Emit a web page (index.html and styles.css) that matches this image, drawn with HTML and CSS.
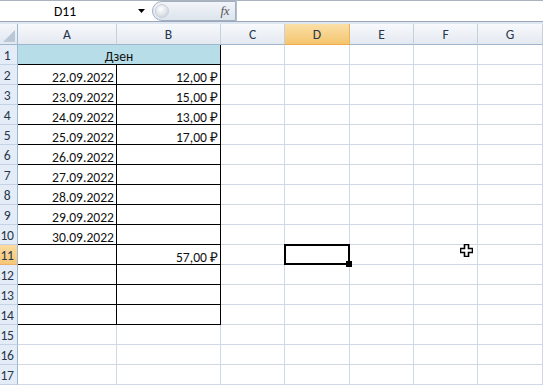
FILE: index.html
```html
<!DOCTYPE html>
<html lang="ru">
<head>
    <meta charset="UTF-8">
    <meta name="viewport" content="width=device-width, initial-scale=1.0">
    <title>Дзен</title>
    <link rel="stylesheet" href="styles.css">
</head>
<body>
<div class="formula-bar">
    <div class="name-box">
        <span class="name">D11</span>
        <svg class="drop" width="7" height="4" viewBox="0 0 7 4"><path d="M0 0h7L3.5 4z" fill="#000"/></svg>
    </div>
    <div class="fx-pill">
        <span class="knob"></span>
        <span class="fx">fx</span>
    </div>
    <div class="formula-input"></div>
</div>
<div class="strip"></div>

<div class="sheet">
    <!-- header row -->
    <div class="corner"><svg width="12" height="12" viewBox="0 0 12 12"><path d="M12 0V12H0z" fill="#b9c7d7"/></svg></div>
    <div class="col-head">A</div>
    <div class="col-head">B</div>
    <div class="col-head">C</div>
    <div class="col-head active">D</div>
    <div class="col-head">E</div>
    <div class="col-head">F</div>
    <div class="col-head">G</div>

    <!-- 1 -->
    <div class="row-head">1</div>
    <div class="cell title">Дзен</div>
    <div class="cell"></div><div class="cell"></div><div class="cell"></div><div class="cell"></div><div class="cell"></div>

    <!-- 2 -->
    <div class="row-head">2</div>
    <div class="cell tb">22.09.2022</div><div class="cell tb">12,00 ₽</div>
    <div class="cell"></div><div class="cell"></div><div class="cell"></div><div class="cell"></div><div class="cell"></div>

    <!-- 3 -->
    <div class="row-head">3</div>
    <div class="cell tb">23.09.2022</div><div class="cell tb">15,00 ₽</div>
    <div class="cell"></div><div class="cell"></div><div class="cell"></div><div class="cell"></div><div class="cell"></div>

    <!-- 4 -->
    <div class="row-head">4</div>
    <div class="cell tb">24.09.2022</div><div class="cell tb">13,00 ₽</div>
    <div class="cell"></div><div class="cell"></div><div class="cell"></div><div class="cell"></div><div class="cell"></div>

    <!-- 5 -->
    <div class="row-head">5</div>
    <div class="cell tb">25.09.2022</div><div class="cell tb">17,00 ₽</div>
    <div class="cell"></div><div class="cell"></div><div class="cell"></div><div class="cell"></div><div class="cell"></div>

    <!-- 6 -->
    <div class="row-head">6</div>
    <div class="cell tb">26.09.2022</div><div class="cell tb"></div>
    <div class="cell"></div><div class="cell"></div><div class="cell"></div><div class="cell"></div><div class="cell"></div>

    <!-- 7 -->
    <div class="row-head">7</div>
    <div class="cell tb">27.09.2022</div><div class="cell tb"></div>
    <div class="cell"></div><div class="cell"></div><div class="cell"></div><div class="cell"></div><div class="cell"></div>

    <!-- 8 -->
    <div class="row-head">8</div>
    <div class="cell tb">28.09.2022</div><div class="cell tb"></div>
    <div class="cell"></div><div class="cell"></div><div class="cell"></div><div class="cell"></div><div class="cell"></div>

    <!-- 9 -->
    <div class="row-head">9</div>
    <div class="cell tb">29.09.2022</div><div class="cell tb"></div>
    <div class="cell"></div><div class="cell"></div><div class="cell"></div><div class="cell"></div><div class="cell"></div>

    <!-- 10 -->
    <div class="row-head">10</div>
    <div class="cell tb">30.09.2022</div><div class="cell tb"></div>
    <div class="cell"></div><div class="cell"></div><div class="cell"></div><div class="cell"></div><div class="cell"></div>

    <!-- 11 -->
    <div class="row-head active">11</div>
    <div class="cell tb"></div><div class="cell tb">57,00 ₽</div>
    <div class="cell"></div>
    <div class="cell selected"><span class="sel-box"><span class="handle"></span></span></div>
    <div class="cell"></div>
    <div class="cell cursor-cell">
        <svg class="cursor" width="13" height="13" viewBox="0 0 13 13"><path d="M4.5 .5h4v4h4v4h-4v4h-4v-4h-4v-4h4z" fill="#fff" stroke="#000" stroke-width="1.6"/></svg>
    </div>
    <div class="cell"></div>

    <!-- 12 -->
    <div class="row-head">12</div>
    <div class="cell tb"></div><div class="cell tb"></div>
    <div class="cell"></div><div class="cell"></div><div class="cell"></div><div class="cell"></div><div class="cell"></div>

    <!-- 13 -->
    <div class="row-head">13</div>
    <div class="cell tb"></div><div class="cell tb"></div>
    <div class="cell"></div><div class="cell"></div><div class="cell"></div><div class="cell"></div><div class="cell"></div>

    <!-- 14 -->
    <div class="row-head">14</div>
    <div class="cell tb"></div><div class="cell tb"></div>
    <div class="cell"></div><div class="cell"></div><div class="cell"></div><div class="cell"></div><div class="cell"></div>

    <!-- 15 -->
    <div class="row-head">15</div>
    <div class="cell"></div><div class="cell"></div>
    <div class="cell"></div><div class="cell"></div><div class="cell"></div><div class="cell"></div><div class="cell"></div>

    <!-- 16 -->
    <div class="row-head">16</div>
    <div class="cell"></div><div class="cell"></div>
    <div class="cell"></div><div class="cell"></div><div class="cell"></div><div class="cell"></div><div class="cell"></div>

    <!-- 17 -->
    <div class="row-head">17</div>
    <div class="cell"></div><div class="cell"></div>
    <div class="cell"></div><div class="cell"></div><div class="cell"></div><div class="cell"></div><div class="cell"></div>
</div>
</body>
</html>
```

FILE: styles.css
```css
* {
    box-sizing: border-box;
}

body {
    margin: 0;
    padding: 0;
    background: #ffffff;
    font-family: "Carlito", "Liberation Sans", Arial, sans-serif;
    font-size: 13.6px;
    color: #111111;
    overflow: hidden;
}

/* formula bar */
.formula-bar {
    display: flex;
    height: 22px;
    border-top: 1px solid #a9b2bd;
    border-bottom: 1px solid #9aa8b9;
    background: #ffffff;
}

.name-box {
    display: flex;
    align-items: center;
    width: 152px;
}

.name {
    width: 130px;
    text-align: center;
    color: #000000;
}

.drop {
    margin-left: 8px;
}

.fx-pill {
    position: relative;
    display: flex;
    align-items: center;
    justify-content: flex-end;
    width: 84px;
    height: 20px;
    padding-right: 6px;
    border: 1px solid #a2afbf;
    border-radius: 10px 0 0 10px;
    background: linear-gradient(#f2f5f9, #dde4ed);
}

.knob {
    position: absolute;
    left: 2px;
    top: 2px;
    width: 14px;
    height: 14px;
    border-radius: 50%;
    background: radial-gradient(circle at 40% 35%, #ffffff, #c3ccd7);
    border: 1px solid #c7d0db;
}

.fx {
    font-family: "Liberation Serif", "DejaVu Serif", serif;
    font-style: italic;
    font-size: 13px;
    color: #555555;
    letter-spacing: -0.5px;
}

.formula-input {
    flex: 1;
    border-left: 1px solid #b4bfcc;
}

.strip {
    height: 2px;
    background: #dde6f1;
}

/* sheet grid */
.sheet {
    display: grid;
    grid-template-columns: 18px 99px 104px 64px 65px 64px 64px 65px;
    grid-template-rows: 21px repeat(17, 20px);
}

.corner {
    display: flex;
    align-items: flex-end;
    justify-content: flex-end;
    padding: 0 2px 2px 0;
    background: linear-gradient(#f4f7fb, #e1e8f1);
    border-right: 1px solid #9eb6ce;
    border-bottom: 1px solid #9eb6ce;
}

.col-head {
    display: flex;
    align-items: flex-end;
    justify-content: center;
    padding-bottom: 3px;
    line-height: 13px;
    color: #27374b;
    background: linear-gradient(#f7f9fc, #e4e9f0);
    border-right: 1px solid #c5d0dd;
    border-bottom: 1px solid #9eb6ce;
}

.col-head.active {
    background: linear-gradient(#fbe0a8, #f4c56f);
    border-right-color: #e8b55c;
    border-bottom-color: #f2a94a;
}

.row-head {
    display: flex;
    align-items: flex-end;
    justify-content: center;
    padding: 0 3px 2px 0;
    line-height: 13px;
    letter-spacing: -0.3px;
    color: #27374b;
    background: #e4ecf7;
    border-right: 1px solid #9eb6ce;
    border-bottom: 1px solid #c5d2e3;
}

.row-head.active {
    background: linear-gradient(#fbdba0, #f5c676);
    border-bottom-color: #eab067;
}

.cell {
    display: flex;
    align-items: flex-end;
    justify-content: flex-end;
    padding: 0 2px 0 0;
    line-height: 13px;
    white-space: nowrap;
    border-right: 1px solid #d0d7e5;
    border-bottom: 1px solid #d0d7e5;
}

.cell.title {
    grid-column: span 2;
    justify-content: center;
    padding: 0 0 1px 0;
    background: #b7dde8;
    border-right-color: #000000;
    border-bottom-color: #000000;
}

.cell.tb {
    border-right-color: #000000;
    border-bottom-color: #000000;
}

.cell.selected,
.cursor-cell {
    position: relative;
}

.sel-box {
    position: absolute;
    left: -1px;
    top: -1px;
    width: 66px;
    height: 21px;
    border: 2px solid #000000;
}

.handle {
    position: absolute;
    right: -4px;
    bottom: -4px;
    width: 6px;
    height: 6px;
    background: #000000;
}

.cursor {
    position: absolute;
    left: 46px;
    top: -1px;
}
```
